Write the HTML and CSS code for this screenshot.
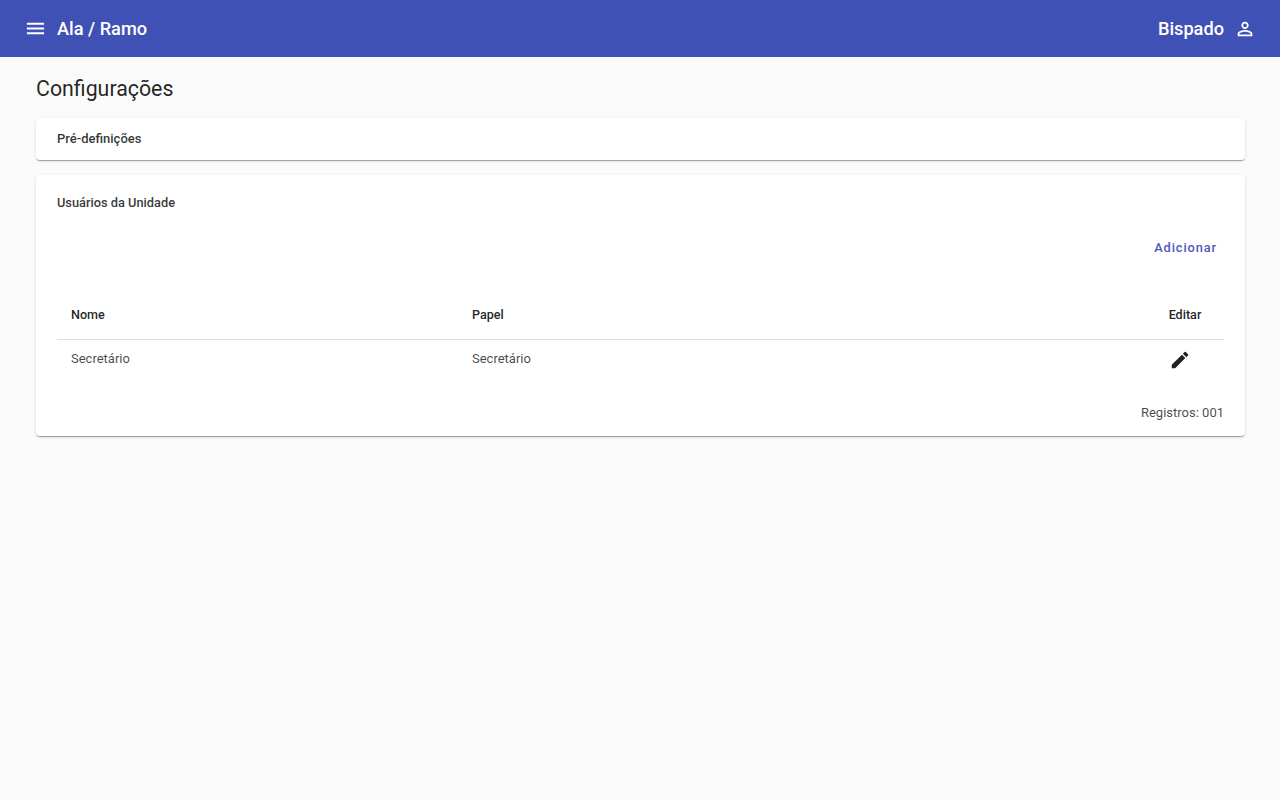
FILE: index.html
```html
<!DOCTYPE html>
<html lang="pt-BR">
<head>
<meta charset="utf-8">
<title>Configurações</title>
<link rel="stylesheet" href="styles.css">
</head>
<body>
<header class="topbar">
  <div class="topbar-left">
    <svg class="icon menu-icon" viewBox="0 0 24 24"><path d="M3 18h18v-2H3v2zm0-5h18v-2H3v2zm0-7v2h18V6H3z"/></svg>
    <span class="topbar-title">Ala / Ramo</span>
  </div>
  <div class="topbar-right">
    <span class="topbar-title">Bispado</span>
    <svg class="icon user-icon" viewBox="0 0 24 24"><path d="M12 5.9a2.1 2.1 0 1 1 0 4.2 2.1 2.1 0 0 1 0-4.2m0 9c2.97 0 6.1 1.46 6.1 2.1v1.1H5.9V17c0-.64 3.13-2.1 6.1-2.1M12 4C9.79 4 8 5.79 8 8s1.79 4 4 4 4-1.79 4-4-1.79-4-4-4zm0 9c-2.67 0-8 1.34-8 4v3h16v-3c0-2.66-5.33-4-8-4z"/></svg>
  </div>
</header>
<main class="content">
  <h1 class="page-title">Configurações</h1>
  <section class="card card-collapsed">
    <h2 class="card-title card-title-wide">Pré-definições</h2>
  </section>
  <section class="card card-users">
    <h2 class="card-title">Usuários da Unidade</h2>
    <div class="actions"><button class="add-button">Adicionar</button></div>
    <table class="users-table">
      <thead>
        <tr><th class="col-name">Nome</th><th class="col-role">Papel</th><th class="col-edit">Editar</th></tr>
      </thead>
      <tbody>
        <tr>
          <td>Secretário</td>
          <td>Secretário</td>
          <td class="cell-edit"><svg class="edit-icon" viewBox="0 0 24 24"><path d="M3 17.25V21h3.75L17.81 9.94l-3.75-3.75L3 17.25zM20.71 7.04a1 1 0 0 0 0-1.41l-2.34-2.34a1 1 0 0 0-1.41 0l-1.83 1.83 3.75 3.75 1.83-1.83z"/></svg></td>
        </tr>
      </tbody>
    </table>
    <div class="records">Registros: 001</div>
  </section>
</main>
</body>
</html>
```
FILE: styles.css
```css
* { box-sizing: border-box; }
html, body { margin: 0; height: 100%; }
body {
  background: #fafafa;
  color: rgba(0, 0, 0, 0.87);
  font-family: Roboto, "Liberation Sans", sans-serif;
  overflow: hidden;
}
.topbar {
  height: 57px;
  background: #3f51b5;
  color: #fff;
  display: flex;
  align-items: center;
  justify-content: space-between;
  padding: 0 24px;
}
.topbar-left, .topbar-right { display: flex; align-items: center; }
.topbar-title { font-size: 18.2px; font-weight: 500; line-height: 24px; }
.icon { fill: #fff; display: block; }
.menu-icon { width: 23px; height: 23px; }
.user-icon { width: 22px; height: 22px; }
.topbar-left .topbar-title { margin-left: 10px; }
.topbar-right .icon { margin-left: 10px; }
.content { padding: 16px 35px 0 36px; }
.page-title {
  margin: 0 0 13px;
  font-size: 21.33px;
  font-weight: 400;
  line-height: 32px;
}
.card {
  background: #fff;
  border-radius: 4px;
  box-shadow: 0 2px 1px -1px rgba(0,0,0,.2), 0 1px 1px 0 rgba(0,0,0,.14), 0 1px 3px 0 rgba(0,0,0,.12);
  padding: 0 21px;
}
.card-collapsed { height: 42px; display: flex; align-items: center; margin-bottom: 15px; }
.card-users { height: 261px; padding-top: 20px; }
.card-title {
  margin: 0;
  font-size: 12.8px;
  font-weight: 500;
  line-height: 16px;
  color: rgba(0,0,0,.8);
}
.card-title-wide { font-size: 13px; }
.actions { display: flex; justify-content: flex-end; margin-top: 18px; height: 36px; }
.add-button {
  background: none;
  border: 0;
  padding: 0 7px 0 8px;
  height: 36px;
  color: #4f58bd;
  font-family: inherit;
  font-size: 12.8px;
  font-weight: 500;
  letter-spacing: .9px;
}
.users-table { width: 100%; border-collapse: collapse; margin-top: 25px; table-layout: fixed; }
.users-table th {
  height: 49px;
  font-size: 12.6px;
  font-weight: 500;
  text-align: left;
  padding: 0 14px;
  border-bottom: 1px solid #e0e0e0;
}
.users-table td {
  height: 38px;
  font-size: 13px;
  padding: 0 14px;
  color: rgba(0,0,0,.72);
}
.col-name { width: 401px; }
.col-edit { width: 78px; text-align: center !important; padding: 0 !important; }
.cell-edit { padding: 0 !important; }
.edit-icon { width: 22px; height: 22px; fill: rgba(0,0,0,.87); display: block; margin: 3px 0 0 23px; }
.records {
  text-align: right;
  font-size: 13px;
  line-height: 16px;
  margin-top: 28px;
  color: rgba(0,0,0,.72);
}
```
